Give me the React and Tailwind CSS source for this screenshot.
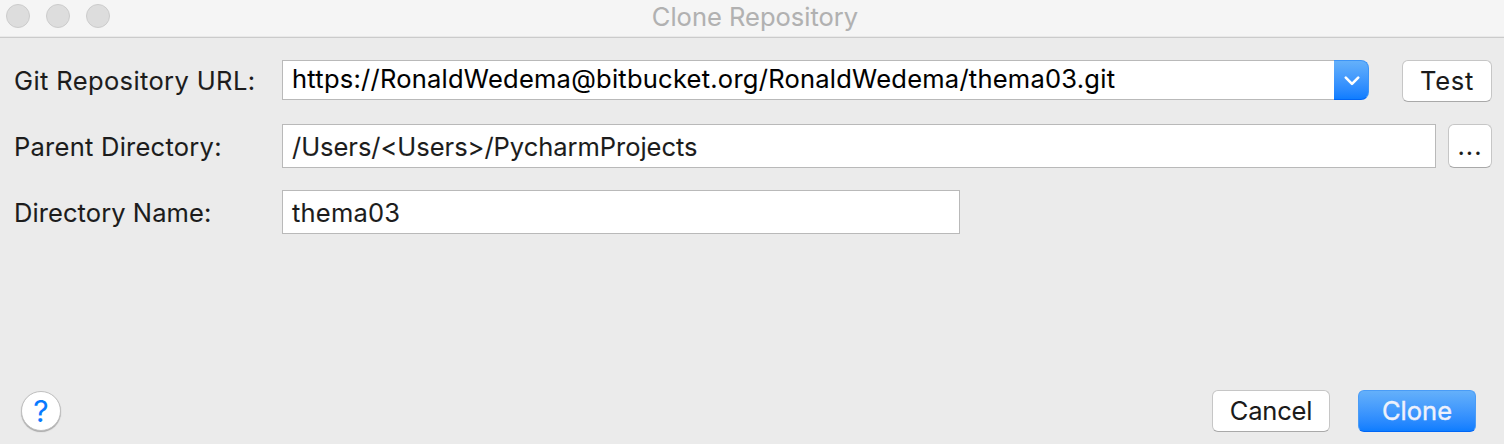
function TrafficLight() {
  return (
    <span className="h-6 w-6 rounded-full border border-[#cccccc] bg-[#dddddd]" />
  );
}

function Label({ children, className }) {
  return (
    <label className={`w-[268px] shrink-0 whitespace-nowrap text-[#1c1c1c] ${className}`}>
      {children}
    </label>
  );
}

function Field({ children, className }) {
  return (
    <div className={`flex items-center whitespace-pre border border-[#b9b9b9] bg-white pl-[9px] ${className}`}>
      {children}
    </div>
  );
}

function Button({ children, className }) {
  return (
    <button
      className={`flex items-center justify-center whitespace-nowrap rounded-[6px] border border-[#c6c6c6] border-b-[#a9a9a9] bg-white text-[#1a1a1a] ${className}`}
    >
      {children}
    </button>
  );
}

export default function App() {
  return (
    <div className="flex h-[444px] w-[1504px] flex-col overflow-hidden bg-[#ebebeb] font-['Inter',sans-serif] text-[25.5px] leading-[32px] [-webkit-text-stroke:0.08px]">
      <header className="grid h-[38px] shrink-0 grid-cols-[1fr_auto_1fr] items-start border-b border-[#cbcbcb] bg-[#f5f5f5] shadow-[inset_0_-1px_0_#e9e9e9]">
        <div className="flex gap-4 pl-[6px] pt-1">
          <TrafficLight />
          <TrafficLight />
          <TrafficLight />
        </div>
        <h1 className="pl-[6px] pt-px font-normal text-[#b1b1b1]">
          Clone Repository
        </h1>
      </header>

      <main className="flex grow flex-col pl-[14px] pr-3 pt-[22px]">
        <div className="flex h-16 items-start">
          <Label className="pt-[5px]">
            <span className="tracking-[0.38px]">Git Repository URL:</span>
          </Label>
          <Field className="h-10 w-[1052px] border-r-0 pb-[2px] text-black">
            <span className="tracking-[0.245px]">
              https://RonaldWedema@bitbucket.org/RonaldWedema/thema03.git
            </span>
          </Field>
          <button className="flex h-10 w-[35px] items-center justify-center rounded-r-[8px] border border-l-0 border-[#3d94f6] border-b-[#0066f5] bg-linear-to-b from-[#64b0fa] to-[#0d7dff]">
            <svg className="mt-px ml-px" width="16" height="10" viewBox="0 0 16 10" fill="none" stroke="white" strokeWidth="2.6" strokeLinecap="round" strokeLinejoin="round">
              <path d="M1.8 1.6 8 7.8 14.2 1.6" />
            </svg>
          </button>
          <Button className="ml-[33px] h-[42px] w-[90px]">
            <span className="tracking-[0.7px]">Test</span>
          </Button>
        </div>

        <div className="flex h-[66px] items-start">
          <Label className="pt-[7px]">
            <span className="tracking-[0.25px]">Parent Directory:</span>
          </Label>
          <Field className="h-11 w-[1154px] pt-[2px] text-[#1c1c1c]">
            <span className="tracking-[-0.03px]">{"/Users/<Users>/PycharmProjects"}</span>
          </Field>
          <Button className="ml-3 h-11 w-11">
            <span className="tracking-[1px]">...</span>
          </Button>
        </div>

        <div className="flex items-start">
          <Label className="pt-[7px]">
            <span className="tracking-[0.08px]">Directory Name:</span>
          </Label>
          <Field className="h-11 w-[678px] pt-[2px] text-[#1c1c1c]">
            <span className="tracking-[0.2px]">thema03</span>
          </Field>
        </div>
      </main>

      <footer className="flex h-[54px] shrink-0 items-start pl-[21px] pr-7">
        <button className="mt-px flex h-10 w-10 items-center justify-center rounded-full border border-[#c0c0c0] bg-white text-[30px] text-[#077aff] shadow-[0_1px_1px_#a8a8a8]">
          ?
        </button>
        <Button className="ml-auto h-[42px] w-[118px]">
          <span className="tracking-[-0.2px]">Cancel</span>
        </Button>
        <button className="ml-7 flex h-[42px] w-[118px] items-center justify-center rounded-[6px] border border-[#4a9cf6] border-b-[#0066f5] bg-linear-to-b from-[#64b0fa] to-[#0d7dff] text-[#eef1fb] [-webkit-text-stroke:0.4px]">
          <span>Clone</span>
        </button>
      </footer>
    </div>
  );
}
